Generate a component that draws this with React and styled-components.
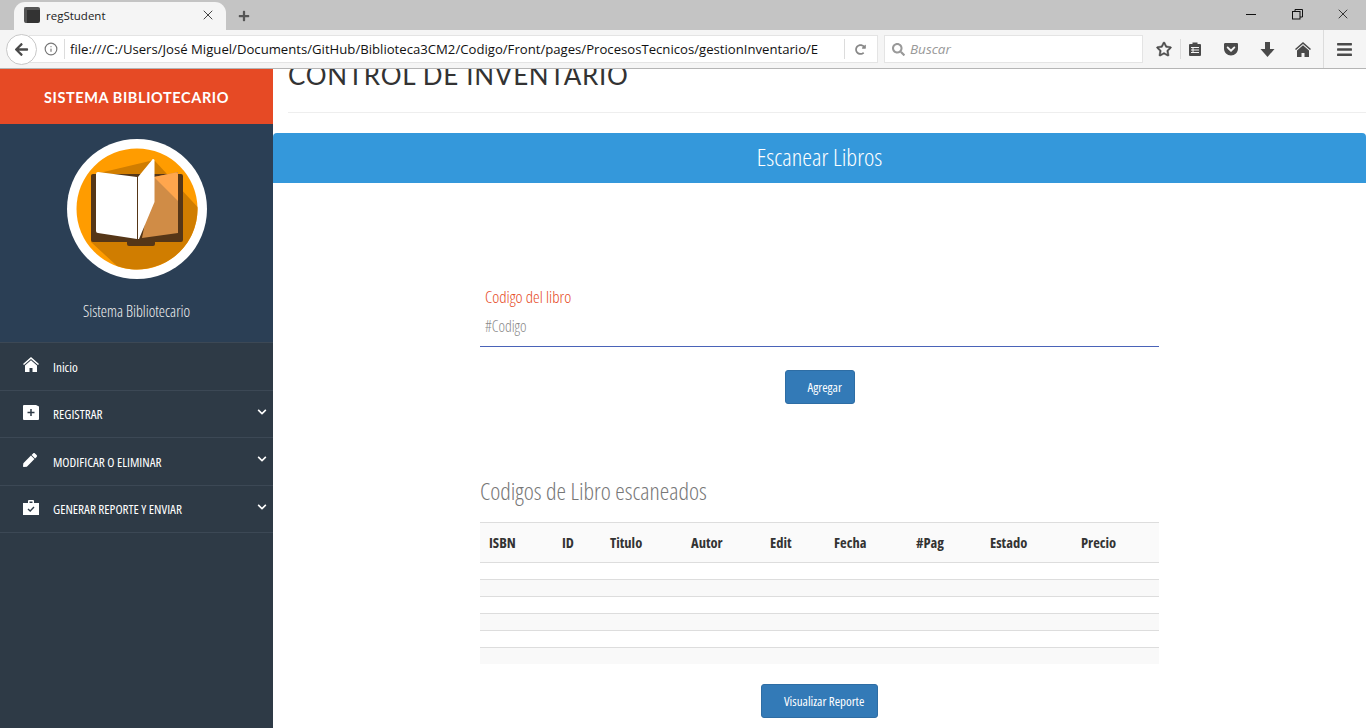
import React from 'react'
import styled, { createGlobalStyle, css } from 'styled-components'
import { FaArrowLeft, FaRegStar, FaGetPocket, FaBars, FaSearch, FaChevronDown, FaPlus, FaPen, FaRedoAlt } from 'react-icons/fa'
import { FiInfo, FiX } from 'react-icons/fi'

const condensed = css`
  font-family: "Open Sans", "Liberation Sans", sans-serif;
  font-stretch: 75%;
  font-weight: 300;
`

const GlobalStyle = createGlobalStyle`
  html, body { margin: 0; padding: 0; height: 100%; background: #fff; }
  body { font-family: "Open Sans", "Liberation Sans", sans-serif; overflow: hidden; }
  * { box-sizing: border-box; }
`

const Page = styled.div`
  width: 1366px;
  height: 728px;
  display: flex;
  flex-direction: column;
  overflow: hidden;
`

/* browser chrome */
const TabStrip = styled.div`
  height: 30px;
  background: #c4c4c4;
  display: flex;
  align-items: flex-end;
  padding-left: 14px;
  flex-shrink: 0;
`
const Tab = styled.div`
  width: 212px;
  height: 28px;
  background: #f5f5f5;
  border-radius: 11px 11px 0 0;
  display: flex;
  align-items: center;
  padding: 0 10px 2px;
  color: #222;
  font-size: 11.5px;
`
const Favicon = styled.div`
  width: 16px;
  height: 16px;
  border-radius: 2px;
  background: #333;
  margin-right: 6px;
  border-top: 3px solid #555;
  border-left: 3px solid #555;
`
const TabTitle = styled.span`
  flex: 1;
`
const NewTab = styled.div`
  width: 36px;
  height: 28px;
  display: flex;
  align-items: center;
  justify-content: center;
  color: #555;
`
const WindowButtons = styled.div`
  margin-left: auto;
  height: 30px;
  display: flex;
`
const WindowButton = styled.div`
  width: 46px;
  display: flex;
  align-items: center;
  justify-content: center;
  padding-bottom: 2px;
`
const Toolbar = styled.div`
  height: 39px;
  background: #f5f5f5;
  border-bottom: 1px solid #b5b5b5;
  display: flex;
  align-items: center;
  padding-left: 6px;
  flex-shrink: 0;
`
const BackButton = styled.div`
  width: 31px;
  height: 31px;
  border-radius: 50%;
  background: #fff;
  border: 1px solid #c8c8c8;
  display: flex;
  align-items: center;
  justify-content: center;
  color: #4a4a4a;
  font-size: 15px;
  z-index: 1;
  flex-shrink: 0;
`
const UrlBar = styled.div`
  width: 849px;
  height: 28px;
  margin-left: -8px;
  background: #fff;
  border: 1px solid #e4e4e4;
  display: flex;
  align-items: center;
  padding-left: 14px;
  color: #777;
`
const Divider = styled.div`
  width: 1px;
  height: ${p => p.$height || 20}px;
  background: #dcdcdc;
  flex-shrink: 0;
  margin: ${p => p.$margin || '0'};
`
const UrlText = styled.div`
  width: 748px;
  margin-left: 5px;
  overflow: hidden;
  white-space: nowrap;
  color: #111;
  font-size: 13.15px;
`
const SearchBar = styled.div`
  width: 259px;
  height: 28px;
  margin-left: 6px;
  background: #fff;
  border: 1px solid #e4e4e4;
  display: flex;
  align-items: center;
  padding-left: 7px;
  color: #999;
  font-size: 13.5px;
  font-style: italic;
  gap: 5px;
`
const ToolIcon = styled.div`
  width: ${p => p.$width || 36}px;
  display: flex;
  justify-content: center;
  align-items: center;
  color: ${p => p.$color || '#4a4a4a'};
  font-size: ${p => p.$size || 16}px;
  margin: ${p => p.$margin || '0'};
  padding: ${p => p.$padding || '0'};
  flex-shrink: 0;
`

/* page */
const Body = styled.div`
  flex: 1;
  display: flex;
  min-height: 0;
`
const Sidebar = styled.aside`
  width: 273px;
  background: #2e3a46;
  flex-shrink: 0;
`
const Brand = styled.div`
  height: 55px;
  background: #e64a25;
  color: #fff;
  font-family: Lato, "Open Sans", sans-serif;
  font-size: 14.5px;
  font-weight: 700;
  letter-spacing: 0.6px;
  display: flex;
  align-items: center;
  justify-content: center;
  padding-top: 1px;
`
const Profile = styled.div`
  height: 218px;
  background: #2b3f55;
  display: flex;
  flex-direction: column;
  align-items: center;
  padding-top: 15px;
  color: #f2f2f2;
  ${condensed}
  font-size: 15.7px;
`
const ProfileName = styled.div`
  margin-top: 21px;
`
const Menu = styled.nav``
const MenuRow = styled.div`
  height: 47.5px;
  border-top: 1px solid #3c4855;
  display: flex;
  align-items: center;
  padding: 1px 0 0 23px;
  color: #fff;
  ${condensed}
  font-weight: 400;
  font-size: 13.2px;
  &:last-child { border-bottom: 1px solid #3c4855; height: 48px; }
`
const MenuIcon = styled.div`
  width: 30px;
  display: flex;
  align-items: center;
  flex-shrink: 0;
  margin-top: -4px;
`
const MenuChevron = styled.div`
  margin-left: auto;
  margin-right: 6px;
  margin-top: -5px;
  display: flex;
  font-size: 10px;
`
const Main = styled.main`
  flex: 1;
  min-width: 0;
`
const TitleBlock = styled.div`
  height: 44px;
  margin-left: 15px;
  border-bottom: 1px solid #eee;
  overflow: hidden;
  display: flex;
  align-items: flex-end;
  padding-bottom: 24px;
`
const Title = styled.h1`
  margin: 0;
  font-family: Lato, sans-serif;
  font-weight: 400;
  font-size: 26px;
  line-height: 26px;
  letter-spacing: 0.7px;
  color: #333;
  white-space: nowrap;
`
const PanelHead = styled.div`
  height: 50px;
  margin-top: 20px;
  padding-bottom: 3px;
  background: #3498db;
  border-radius: 4px 4px 0 0;
  color: #fff;
  ${condensed}
  font-size: 24.7px;
  display: flex;
  align-items: center;
  justify-content: center;
`
const Content = styled.div`
  width: 679px;
  margin-left: 207px;
  ${condensed}
`
const Field = styled.div`
  margin-top: 103px;
  height: 61px;
  padding-left: 5px;
  border-bottom: 1px solid #4a63b8;
`
const FieldLabel = styled.label`
  display: block;
  color: #e64a25;
  font-size: 16.8px;
  line-height: 22px;
`
const FieldInput = styled.input`
  display: block;
  width: 100%;
  border: 0;
  outline: 0;
  padding: 0;
  margin-top: 7px;
  background: transparent;
  ${condensed}
  font-size: 15.5px;
  line-height: 22px;
  &::placeholder { color: #888; opacity: 1; }
`
const ButtonRow = styled.div`
  display: flex;
  justify-content: center;
  margin-top: ${p => p.$top}px;
`
const Button = styled.button`
  height: 34px;
  width: ${p => p.$width}px;
  padding: 0 0 0 ${p => p.$pad}px;
  background: #337ab7;
  border: 1px solid #2e6da4;
  border-radius: 3px;
  color: #fff;
  ${condensed}
  font-weight: 400;
  font-size: 13px;
  text-align: left;
`
const SectionTitle = styled.h3`
  margin: 72px 0 0;
  font-size: 24px;
  font-weight: 300;
  line-height: 29px;
  color: #777;
`
const Table = styled.div`
  margin-top: 17px;
  border-top: 1px solid #ddd;
`
const columns = '73px 48px 81px 79px 64px 82px 74px 91px 87px'
const HeadRow = styled.div`
  display: grid;
  grid-template-columns: ${columns};
  height: 40px;
  align-items: center;
  padding-left: 9px;
  background: #fafafa;
  border-bottom: 1px solid #ddd;
  color: #333;
  font-size: 14.5px;
  font-weight: 700;
`
const EmptyRow = styled.div`
  height: ${p => (p.$first ? 16 : 17)}px;
  background: ${p => (p.$odd ? '#f9f9f9' : '#fff')};
  border-top: ${p => (p.$first ? 0 : '1px solid #ddd')};
`

const BookLogo = () => (
  <svg width="140" height="140" viewBox="0 0 140 140">
    <circle cx="70" cy="70" r="70" fill="#fff" />
    <circle cx="70" cy="70" r="60.5" fill="#ff9c00" />
    <path d="M24 103 L50 127 A60.5 60.5 0 0 0 130.5 68 L87 21 L24 36 Z" fill="#d07d00" />
    <path d="M24 37 a2 2 0 0 1 2-2 H114 a2 2 0 0 1 2 2 V101 a2 2 0 0 1 -2 2 H88 v2 a2 2 0 0 1 -2 2 H62 a2 2 0 0 1 -2-2 v-2 H26 a2 2 0 0 1 -2-2 Z" fill="#553617" />
    <path d="M75 99 L87 38 L111 33 V94 Z" fill="#d08c46" />
    <path d="M87 38 L109 33.5 a2 2 0 0 1 2 2 V62 Z" fill="#ffa64d" />
    <path d="M31 33 L70 38 V100 L31 94 a2 2 0 0 1 -2-2 V35 a2 2 0 0 1 2-2 Z" fill="#fff" />
    <path d="M71 38 L85 21 a1 1 0 0 1 2.5 1 V63 L72 100 L71 100 Z" fill="#fff" />
  </svg>
)

const RestoreIcon = () => (
  <svg width="11" height="11" viewBox="0 0 11 11" fill="none" stroke="#111">
    <rect x="0.5" y="2.5" width="7.5" height="7.5" />
    <path d="M3 2.5 V0.5 H10.5 V8 H8" />
  </svg>
)
const MinimizeIcon = () => (
  <svg width="10" height="10" viewBox="0 0 10 10"><path d="M0 5.5 H10" stroke="#111" /></svg>
)
const ClipboardIcon = () => (
  <svg width="14" height="14" viewBox="0 0 14 14">
    <path d="M1 3 a1 1 0 0 1 1-1 H4.5 V0.5 H9.5 V2 H12 a1 1 0 0 1 1 1 V13 a1 1 0 0 1 -1 1 H2 a1 1 0 0 1 -1-1 Z" fill="#4a4a4a" />
    <path d="M3 5.5 H11 M3 8 H11 M3 10.5 H11 M5 5 V11" stroke="#f5f5f5" strokeWidth="1" />
  </svg>
)
const DownloadArrow = () => (
  <svg width="15" height="15" viewBox="0 0 15 15">
    <path d="M5 0 H10 V7 H14.5 L7.5 15 L0.5 7 H5 Z" fill="#4a4a4a" />
  </svg>
)
// house with a detached roof line, as in the browser and the side menu
const HouseIcon = ({ color }) => (
  <svg width="16" height="15" viewBox="0 0 16 15">
    <path d="M8 0 L16 7 L15 8 L8 2 L1 8 L0 7 Z" fill={color} />
    <path d="M8 3.2 L14 8.4 V15 H9.5 V11 H6.5 V15 H2 V8.4 Z" fill={color} />
  </svg>
)
const AddBoxIcon = () => (
  <svg width="16" height="15" viewBox="0 0 16 15">
    <path d="M1 0 H13 L14 0.5 L15 1 a1 1 0 0 1 1 1 V14 a1 1 0 0 1 -1 1 H1 a1 1 0 0 1 -1-1 V1 a1 1 0 0 1 1-1 Z" fill="#fff" />
    <path d="M8 4 V11 M4.5 7.5 H11.5" stroke="#2e3a46" strokeWidth="1.5" />
  </svg>
)
const CaseCheckIcon = () => (
  <svg width="16" height="15" viewBox="0 0 16 15">
    <path d="M0 3 H5 V1 a1 1 0 0 1 1-1 H10 a1 1 0 0 1 1 1 V3 H16 V15 H0 Z M6.5 1.5 V3 H9.5 V1.5 Z" fill="#fff" fillRule="evenodd" />
    <path d="M5 9 L7.2 11 L11 7" stroke="#2e3a46" strokeWidth="1.4" fill="none" />
  </svg>
)

const menuItems = [
  { label: 'Inicio', icon: <HouseIcon color="#fff" /> },
  { label: 'REGISTRAR', icon: <AddBoxIcon />, more: true },
  { label: 'MODIFICAR O ELIMINAR', icon: <FaPen size={14} />, more: true },
  { label: 'GENERAR REPORTE Y ENVIAR', icon: <CaseCheckIcon />, more: true },
]

const headers = ['ISBN', 'ID', 'Titulo', 'Autor', 'Edit', 'Fecha', '#Pag', 'Estado', 'Precio']

export default function App() {
  return (
    <Page>
      <GlobalStyle />
      <TabStrip>
        <Tab>
          <Favicon />
          <TabTitle>regStudent</TabTitle>
          <FiX size={16} color="#444" strokeWidth={1.5} />
        </Tab>
        <NewTab><FaPlus size={12} /></NewTab>
        <WindowButtons>
          <WindowButton><MinimizeIcon /></WindowButton>
          <WindowButton><RestoreIcon /></WindowButton>
          <WindowButton><FiX size={16} color="#111" strokeWidth={1.2} /></WindowButton>
        </WindowButtons>
      </TabStrip>
      <Toolbar>
        <BackButton><FaArrowLeft /></BackButton>
        <UrlBar>
          <FiInfo size={14} />
          <Divider $margin="0 0 0 6px" />
          <UrlText>file:///C:/Users/José Miguel/Documents/GitHub/Biblioteca3CM2/Codigo/Front/pages/ProcesosTecnicos/gestionInventario/E</UrlText>
          <Divider $margin="0 0 0 26px" />
          <ToolIcon $size={11} $color="#888" $width={30}><FaRedoAlt /></ToolIcon>
        </UrlBar>
        <SearchBar><FaSearch size={13} color="#999" /> Buscar</SearchBar>
        <ToolIcon $width={32} $margin="0 0 0 5px"><FaRegStar stroke="currentColor" strokeWidth={20} /></ToolIcon>
        <Divider />
        <ToolIcon $width={32} $padding="0 4px 0 0"><ClipboardIcon /></ToolIcon>
        <ToolIcon><FaGetPocket /></ToolIcon>
        <ToolIcon><DownloadArrow /></ToolIcon>
        <ToolIcon><HouseIcon color="#4a4a4a" /></ToolIcon>
        <Divider $height={38} $margin="0 2px" />
        <ToolIcon $size={17}><FaBars /></ToolIcon>
      </Toolbar>
      <Body>
        <Sidebar>
          <Brand>SISTEMA BIBLIOTECARIO</Brand>
          <Profile>
            <BookLogo />
            <ProfileName>Sistema Bibliotecario</ProfileName>
          </Profile>
          <Menu>
            {menuItems.map(item => (
              <MenuRow key={item.label}>
                <MenuIcon>{item.icon}</MenuIcon>
                {item.label}
                {item.more && <MenuChevron><FaChevronDown /></MenuChevron>}
              </MenuRow>
            ))}
          </Menu>
        </Sidebar>
        <Main>
          <TitleBlock><Title>CONTROL DE INVENTARIO</Title></TitleBlock>
          <PanelHead>Escanear Libros</PanelHead>
          <Content>
            <Field>
              <FieldLabel>Codigo del libro</FieldLabel>
              <FieldInput placeholder="#Codigo" readOnly />
            </Field>
            <ButtonRow $top={23}><Button $width={70} $pad={22}>Agregar</Button></ButtonRow>
            <SectionTitle>Codigos de Libro escaneados</SectionTitle>
            <Table>
              <HeadRow>{headers.map(h => <span key={h}>{h}</span>)}</HeadRow>
              {[0, 1, 2, 3, 4, 5].map(i => <EmptyRow key={i} $first={i === 0} $odd={i % 2 === 1} />)}
            </Table>
            <ButtonRow $top={20}><Button $width={117} $pad={22}>Visualizar Reporte</Button></ButtonRow>
          </Content>
        </Main>
      </Body>
    </Page>
  )
}
